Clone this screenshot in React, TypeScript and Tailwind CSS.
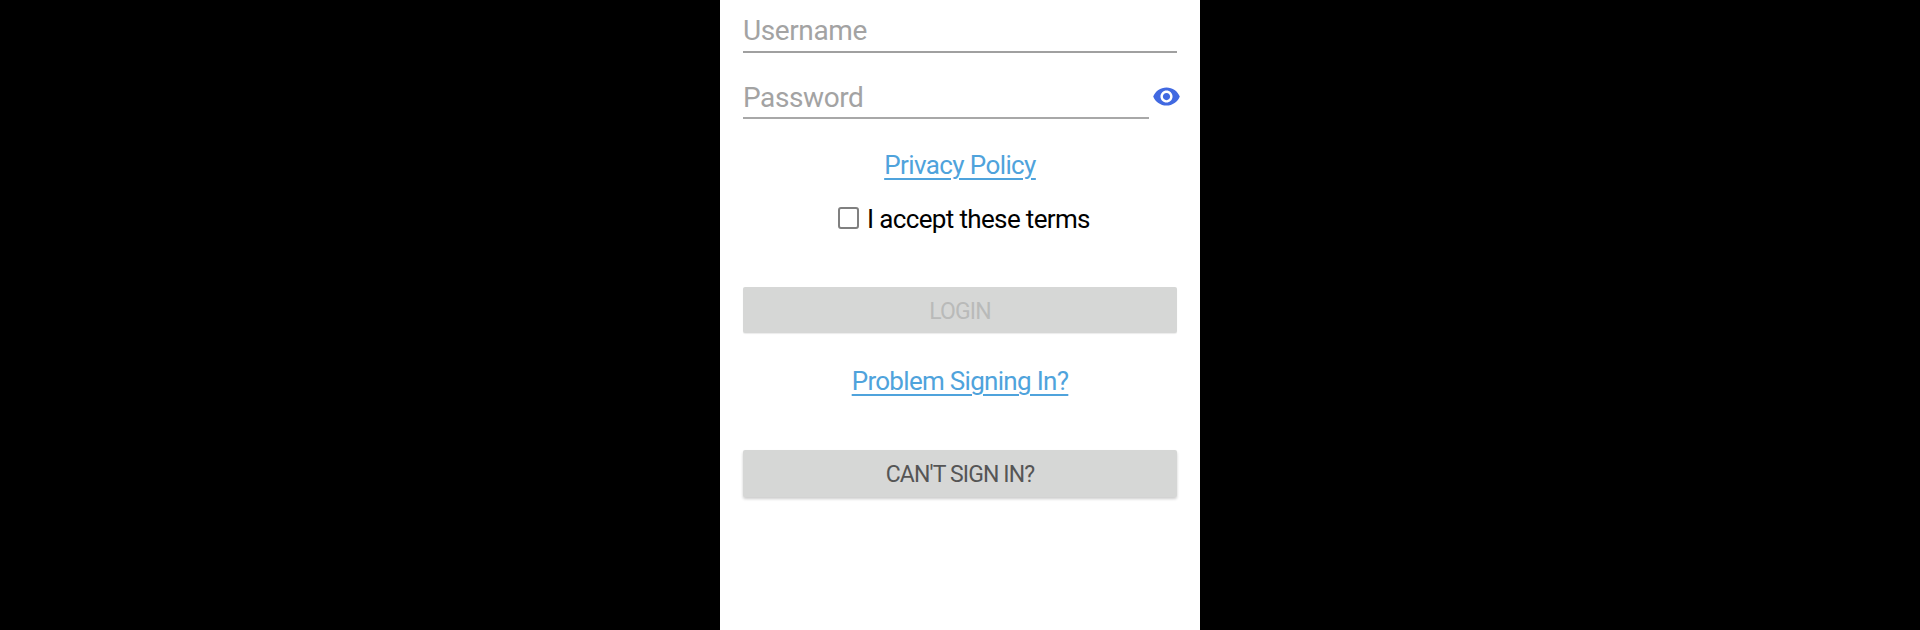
export default function App() {
  return (
    <div className="h-[630px] w-full bg-black flex justify-center overflow-hidden font-['Roboto',sans-serif]">
      <div className="w-[480px] h-full bg-white px-[23px] flex flex-col">
        {/* Username */}
        <div className="h-[53px] w-[434px] border-b-2 border-[#a0a0a0] flex items-end">
          <span className="text-[28px] leading-[40px] tracking-[-0.4px] text-[#a3a3a3]">Username</span>
        </div>

        {/* Password */}
        <div className="mt-[13px] flex items-center w-[438px]">
          <div className="h-[53px] w-[406px] border-b-2 border-[#a8a8a8] flex items-end">
            <span className="text-[28px] leading-[40px] tracking-[-0.4px] text-[#a3a3a3] translate-y-[1px]">Password</span>
          </div>
          <svg viewBox="0 0 24 24" className="w-[29px] h-[29px] ml-[3px] mt-[7px]" fill="#4169e1">
            <path d="M12 4.5C7 4.5 2.73 7.61 1 12c1.73 4.39 6 7.5 11 7.5s9.27-3.11 11-7.5c-1.73-4.39-6-7.5-11-7.5zM12 17c-2.76 0-5-2.24-5-5s2.24-5 5-5 5 2.24 5 5-2.24 5-5 5zm0-8c-1.66 0-3 1.34-3 3s1.34 3 3 3 3-1.34 3-3-1.34-3-3-3z" />
          </svg>
        </div>

        <a className="mt-[27px] text-center text-[26px] leading-[38px] tracking-[-0.6px] text-[#4fa3dc] underline underline-offset-[4px] decoration-[2px]">
          Privacy Policy
        </a>

        <div className="mt-[14px] ml-[8px] flex items-center justify-center h-[42px]">
          <span className="w-[21px] h-[22px] border-[2.5px] border-[#808080] rounded-[3px] mr-[8px] -mt-[2px]" />
          <span className="text-[26px] leading-[38px] tracking-[-0.65px] text-black">I accept these terms</span>
        </div>

        <button className="mt-[47px] h-[46px] w-[434px] shrink-0 bg-[#d6d7d6] rounded-[2px] text-[23px] tracking-[-0.9px] text-[#b9bab9] shadow-[0_1px_1px_rgba(0,0,0,0.08)] flex items-center justify-center">
          <span className="translate-y-[2px]">LOGIN</span>
        </button>

        <a className="mt-[29px] text-center text-[26px] leading-[38px] tracking-[-0.7px] text-[#4fa3dc] underline underline-offset-[4px] decoration-[2px]">
          Problem Signing In?
        </a>

        <button className="mt-[50px] h-[47px] w-[434px] shrink-0 bg-[#d6d7d6] rounded-[2px] text-[23px] tracking-[-0.85px] text-[#555555] shadow-[0_2px_3px_rgba(0,0,0,0.2)] flex items-center justify-center">
          <span className="translate-y-[2px]">CAN'T SIGN IN?</span>
        </button>
      </div>
    </div>
  )
}
